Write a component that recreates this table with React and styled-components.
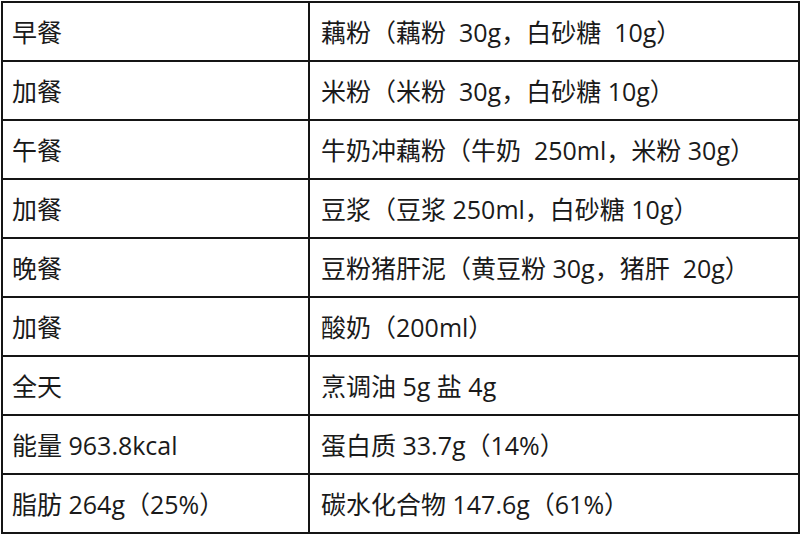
import React from "react";
import styled, { createGlobalStyle } from "styled-components";

const Global = createGlobalStyle`
  html, body {
    margin: 0;
    padding: 0;
    background: #ffffff;
  }
  body {
    font-family: "Open Sans", "Noto Sans CJK SC", sans-serif;
  }
`;

const Page = styled.div`
  padding: 1px 0 0 1px;
`;

const Table = styled.div`
  display: grid;
  grid-template-columns: 305px 488px;
  grid-auto-rows: 57px;
  gap: 2px;
  padding: 2px;
  width: max-content;
  background: #151515;
`;

const Cell = styled.div`
  display: flex;
  align-items: center;
  background: #ffffff;
  padding-left: ${(p) => (p.$right ? "11px" : "9px")};
  padding-top: 1px;
  font-size: 25px;
  line-height: 1;
  color: #1a1a1a;
  white-space: pre;
`;

const rows = [
  ["早餐", "藕粉（藕粉  30g，白砂糖  10g）"],
  ["加餐", "米粉（米粉  30g，白砂糖 10g）"],
  ["午餐", "牛奶冲藕粉（牛奶  250ml，米粉 30g）"],
  ["加餐", "豆浆（豆浆 250ml，白砂糖 10g）"],
  ["晚餐", "豆粉猪肝泥（黄豆粉 30g，猪肝  20g）"],
  ["加餐", "酸奶（200ml）"],
  ["全天", "烹调油 5g 盐 4g"],
  ["能量 963.8kcal", "蛋白质 33.7g（14%）"],
  ["脂肪 264g（25%）", "碳水化合物 147.6g（61%）"],
];

export default function App() {
  return (
    <>
      <Global />
      <Page>
        <Table>
          {rows.map(([a, b], i) => (
            <React.Fragment key={i}>
              <Cell>{a}</Cell>
              <Cell $right>{b}</Cell>
            </React.Fragment>
          ))}
        </Table>
      </Page>
    </>
  );
}
